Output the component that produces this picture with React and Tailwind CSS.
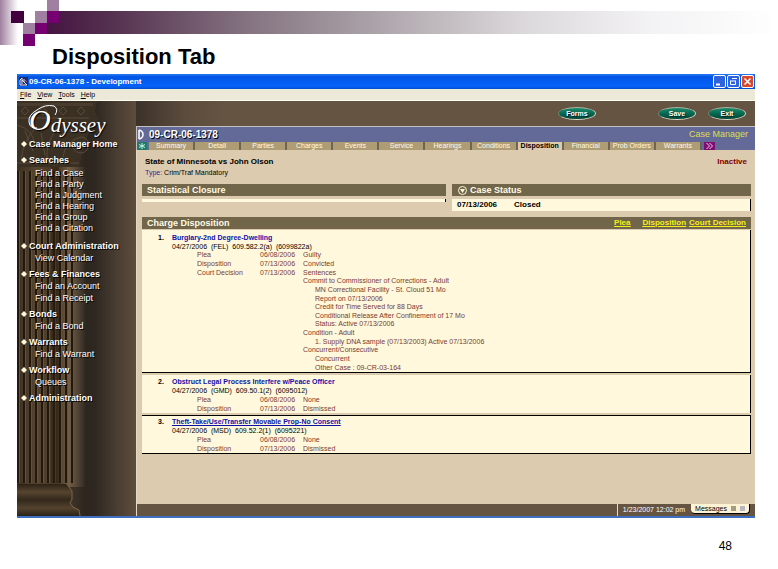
const navGroups = [
    { title: "Case Manager Home", items: [] },
    {
        title: "Searches",
        dense: true,
        items: ["Find a Case", "Find a Party", "Find a Judgment", "Find a Hearing", "Find a Group", "Find a Citation"],
    },
    { title: "Court Administration", items: ["View Calendar"] },
    { title: "Fees & Finances", items: ["Find an Account", "Find a Receipt"] },
    { title: "Bonds", items: ["Find a Bond"] },
    { title: "Warrants", items: ["Find a Warrant"] },
    { title: "Workflow", items: ["Queues"] },
    { title: "Administration", items: [] },
];

const tabs = [
    "Summary",
    "Detail",
    "Parties",
    "Charges",
    "Events",
    "Service",
    "Hearings",
    "Conditions",
    "Disposition",
    "Financial",
    "Prob Orders",
    "Warrants",
];

const charges = [
    {
        title: "Burglary-2nd Degree-Dwelling",
        statute: "04/27/2006  (FEL)  609.582.2(a)  (6099822a)",
        rows: [
            ["Plea", "06/08/2006", "Guilty"],
            ["Disposition", "07/13/2006", "Convicted"],
            ["Court Decision", "07/13/2006", "Sentences"],
            ["", "", "Commit to Commissioner of Corrections - Adult"],
            ["", "", "MN Correctional Facility - St. Cloud 51 Mo", true],
            ["", "", "Report on 07/13/2006", true],
            ["", "", "Credit for Time Served for 88 Days", true],
            ["", "", "Conditional Release After Confinement of 17 Mo", true],
            ["", "", "Status: Active 07/13/2006", true],
            ["", "", "Condition - Adult"],
            ["", "", "1. Supply DNA sample (07/13/2003) Active 07/13/2006", true],
            ["", "", "Concurrent/Consecutive"],
            ["", "", "Concurrent", true],
            ["", "", "Other Case : 09-CR-03-164", true],
        ],
        panel: "border-b pt-[3px]",
        table: "h-[121px]",
    },
    {
        title: "Obstruct Legal Process Interfere w/Peace Officer",
        statute: "04/27/2006  (GMD)  609.50.1(2)  (6095012)",
        rows: [
            ["Plea", "06/08/2006", "None"],
            ["Disposition", "07/13/2006", "Dismissed"],
        ],
        panel: "pt-[2px]",
        table: "h-[18px]",
    },
    {
        title: "Theft-Take/Use/Transfer Movable Prop-No Consent",
        statute: "04/27/2006  (MSD)  609.52.2(1)  (6095221)",
        rows: [
            ["Plea", "06/08/2006", "None"],
            ["Disposition", "07/13/2006", "Dismissed"],
        ],
        underlined: true,
        panel: "border-y pt-[1px]",
        table: "h-[18px]",
    },
];

function SlideHeader() {
    return (
        <div className="relative h-[46px]">
            <div className="absolute top-[11px] right-0 left-[35px] h-[23px] bg-[linear-gradient(to_right,#42103f_0%,#54304f_10%,#83717f_28%,#aaa1a7_45%,#dcd9dc_66%,#f3f2f4_83%,#ffffff_100%)]" />
            <svg className="absolute top-0 left-0" width="60" height="46" viewBox="0 0 60 46" shapeRendering="crispEdges">
                <defs>
                    <linearGradient id="fade">
                        <stop offset="0" stopColor="#a080a0" />
                        <stop offset="1" stopColor="#ffffff" />
                    </linearGradient>
                </defs>
                <rect width="60" height="11" fill="#fff" />
                <rect x="23" y="11" width="24" height="23" fill="#fff" />
                <rect width="18" height="45" fill="url(#fade)" />
                <rect x="11" y="11" width="13" height="12" fill="#42003f" />
                <rect x="23" y="23" width="12" height="11" fill="#a080a0" />
                <rect x="23" y="34" width="12" height="12" fill="#760072" />
                <rect x="35" y="11" width="12" height="12" fill="#a080a0" />
                <rect x="35" y="23" width="12" height="11" fill="#760072" />
                <rect x="47" y="0" width="12" height="11" fill="#a080a0" />
                <rect x="47" y="11" width="12" height="12" fill="#760072" />
            </svg>
        </div>
    );
}

function TitleBar() {
    return (
        <div className="flex h-[15px] items-center bg-[linear-gradient(#2a7df5_0%,#0355e4_18%,#0562fb_80%,#0450d0_100%)] pr-px pl-[2px]">
            <svg width="9" height="9" viewBox="0 0 9 9">
                <rect width="9" height="9" fill="#1b2a6b" />
                <path d="M1 8V3l2-2v6M3 3l5 5M5 2v3M1 8h7" stroke="#e8e4ee" fill="none" />
                <path d="M6 3l2 2" stroke="#b05a6a" />
            </svg>
            <span className="ml-px flex-1 text-[8px] leading-[15px] font-bold text-white">09-CR-06-1378 - Development</span>
            <div className="flex gap-px">
                <button aria-label="Minimize" className="size-[13px] rounded-[2px] border border-white bg-[#2f62dd]">
                    <svg viewBox="0 0 11 11"><path d="M2 8.500h4" stroke="#fff" strokeWidth="2" /></svg>
                </button>
                <button aria-label="Restore" className="size-[13px] rounded-[2px] border border-white bg-[#2f62dd]">
                    <svg viewBox="0 0 11 11" fill="none" stroke="#fff"><path d="M4 2.500h5M2.500 5v3.500h5V5M2 5h6" /></svg>
                </button>
                <button aria-label="Close" className="size-[13px] rounded-[2px] border border-white bg-[#d8492c]">
                    <svg viewBox="0 0 11 11"><path d="M2.500 2.500l6 6M8.500 2.500l-6 6" stroke="#fff" strokeWidth="1.500" /></svg>
                </button>
            </div>
        </div>
    );
}

function MenuBar() {
    return (
        <nav className="flex h-[12px] gap-[6px] border-b border-[#fffef0] bg-[#ece9d8] pl-[3px] text-[7px] leading-[11px] text-black">
            {["File", "View", "Tools", "Help"].map((label) => (
                <button key={label}>
                    <span className="underline">{label[0]}</span>{label.slice(1)}
                </button>
            ))}
        </nav>
    );
}

// Stone column behind the navigation
function Column() {
    const flutes = [2, 8, 14, 20, 26, 32, 38, 44, 50, 56];
    return (
        <svg className="absolute top-0 left-0" width="119" height="415" viewBox="0 0 119 415" aria-hidden="true">
            <defs>
                <linearGradient id="shaft">
                    <stop offset="0" stopColor="#3f3121" />
                    <stop offset="0.4" stopColor="#57452f" />
                    <stop offset="0.8" stopColor="#453521" />
                    <stop offset="1" stopColor="#6b5740" />
                </linearGradient>
                <linearGradient id="base" x1="0" y1="0" x2="0" y2="1">
                    <stop offset="0" stopColor="#2c2215" />
                    <stop offset="0.25" stopColor="#56452f" />
                    <stop offset="0.5" stopColor="#33281a" />
                    <stop offset="0.75" stopColor="#54432f" />
                    <stop offset="1" stopColor="#2b2217" />
                </linearGradient>
                <linearGradient id="halo">
                    <stop offset="0" stopColor="#78634a" />
                    <stop offset="1" stopColor="#78634a" stopOpacity="0" />
                </linearGradient>
            </defs>
            <path d="M0 0h80l-2 10 4 8-10 12-6 18-4 18H0z" fill="#3b3024" />
            <path d="M0 2h76v3H0zM0 16h72v2H0z" fill="#4a3d2d" />
            <g fill="none" stroke="#5a4b38">
                <path d="M4 10l4-4 4 4-4 4zM22 10l4-4 4 4-4 4zM42 10l4-4 4 4-4 4zM60 10l4-4 4 4-4 4z" />
                <path d="M0 24q16 4 18 20M4 60q2-22 16-34M30 60q-2-20 12-34M46 56q2-16 18-20a8 8 0 1 1-8 10" />
                <path d="M0 62h62M8 30l8 20M24 32l4 22" />
            </g>
            <rect x="49" y="66" width="20" height="320" fill="url(#halo)" />
            <rect y="66" width="50" height="320" fill="url(#shaft)" />
            {flutes.map((x) => (
                <g key={x}>
                    <rect x={x - 2} y="70" width="2" height="312" fill="#211910" />
                    <rect x={x} y="70" width="1" height="312" fill="#665238" />
                </g>
            ))}
            <rect x="34" y="66" width="8" height="316" fill="#2a2014" opacity="0.5" />
            <path d="M0 383h50l5 7-1 8-1 4 3 4 6 3 1 6H0z" fill="url(#base)" />
            <path d="M49 382l6 8v8l-2 4 3 4 6 3 1 6" fill="none" stroke="#7a654a" />
        </svg>
    );
}

function Logo() {
    return (
        <div className="relative flex h-[35px] items-end pl-[12px] font-['Liberation_Serif',serif] text-white italic [text-shadow:1px_1px_1px_#000]">
            {/* flourish around the capital */}
            <svg className="absolute top-0 left-[8px]" width="60" height="35" viewBox="0 0 60 35" fill="none" stroke="#fff" aria-hidden="true">
                <path d="M12 9Q3 14 4 21t8 6M12 9q8-6 17-4 5 3 1 9" />
            </svg>
            <span className="text-[30px] leading-[33px]">O</span>
            <span className="text-[21px] leading-[22px]">dyssey</span>
        </div>
    );
}

function Sidebar() {
    return (
        <aside className="relative w-[119px] shrink-0 bg-[linear-gradient(to_right,#40362a_0%,#40362a_42%,#3a3026_48%,#2d261f_58%,#2f2822_66%,#4a3d31_84%,#5d4d3e_100%)]">
            <Column />
            <div className="relative">
                <Logo />
                <nav className="pt-[2px] pl-[4px] text-white [text-shadow:1px_1px_0_#000]">
                    {navGroups.map((group) => (
                        <div key={group.title} className="mb-1">
                            <a href="#" className="flex items-center text-[9px] leading-[12px] font-bold">
                                <svg className="mr-[2px]" width="6" height="6" viewBox="0 0 6 6"><path d="M3 0l3 3-3 3-3-3z" fill="#fff8dc" /></svg>
                                {group.title}
                            </a>
                            {group.items.length > 0 && (
                                <ul className={`pl-[14px] text-[9px] ${group.dense ? "py-[2px] leading-[11px]" : "leading-[12px]"}`}>
                                    {group.items.map((item) => (
                                        <li key={item}><a href="#">{item}</a></li>
                                    ))}
                                </ul>
                            )}
                        </div>
                    ))}
                </nav>
            </div>
        </aside>
    );
}

function OvalButton({ children }) {
    return (
        <button className="h-[13px] w-[38px] rounded-[50%] border border-t-[#a9b3a0] border-r-[#d6d0bd] border-b-[#e0dccb] border-l-[#6f8072] bg-[linear-gradient(#1c8a6c,#04624c_60%,#024436)] text-center text-[7px] leading-[10px] font-bold text-white [text-shadow:1px_1px_0_#022]">
            {children}
        </button>
    );
}

function CaseHeader() {
    return (
        <header className="border-t border-l border-[#c4c0c0] bg-[#646a98]">
            <div className="flex h-[15px] items-center justify-between pr-[7px]">
                <div className="flex items-center">
                    <svg width="8" height="11" viewBox="0 0 8 11"><path d="M2 1v9M2 1q4 1 4 4.500T2 10" fill="none" stroke="#fff" strokeWidth="1.500" /></svg>
                    <h2 className="ml-[4px] text-[10px] leading-[15px] font-bold text-white [text-shadow:1px_1px_0_#000]">09-CR-06-1378</h2>
                </div>
                <span className="text-[9px] leading-[15px] text-[#dede50]">Case Manager</span>
            </div>
            <div className="flex h-[8px] items-stretch">
                <button aria-label="Favorites" className="mr-[2px] w-[10px] bg-[#25796b]">
                    <svg width="10" height="8" viewBox="0 0 10 8"><path d="M5 1v6M2 2.500l6 3M8 2.500l-6 3" stroke="#bff2dc" /></svg>
                </button>
                {tabs.map((tab) => (
                    <button
                        key={tab}
                        className={`min-w-0 flex-1 border-r-2 border-[#6f6553] text-center text-[7px] leading-[8px] whitespace-nowrap ${
                            tab === "Disposition" ? "bg-[#dccbae] font-bold text-black" : "bg-[#ae9c75] text-[#fffbe8]"
                        }`}
                    >
                        {tab}
                    </button>
                ))}
                <button aria-label="More tabs" className="mr-[40px] ml-[2px] w-[11px] bg-[#7c0f70]">
                    <svg width="11" height="8" viewBox="0 0 11 8" fill="none" stroke="#f6c8ee"><path d="M2.500 1l3 3-3 3M5.500 1l3 3-3 3" /></svg>
                </button>
            </div>
        </header>
    );
}

function Charge({ charge, number }) {
    return (
        <section className={`flex border-r border-black bg-[#fff8dc] text-[7px] ${charge.panel}`}>
            <span className="w-[30px] pl-[16px] leading-[9px] font-bold">{number}.</span>
            <div>
                <h4 className="leading-[9px] font-bold">
                    <a href="#" className={`text-[#1010a8] ${charge.underlined ? "underline" : ""}`}>{charge.title}</a>
                </h4>
                <p className="leading-[9px] whitespace-pre">{charge.statute}</p>
                <table className={`ml-[25px] border-collapse leading-[8px] text-[#7a3a30] ${charge.table}`}>
                    <tbody>
                        {charge.rows.map(([label, date, value, nested], i) => (
                            <tr key={i}>
                                <td className="w-[63px] p-0">{label}</td>
                                <td className="w-[43px] p-0">{date}</td>
                                <td className={nested ? "p-0 pl-[12px]" : "p-0"}>{value}</td>
                            </tr>
                        ))}
                    </tbody>
                </table>
            </div>
        </section>
    );
}

function CaseBody() {
    return (
        <main className="flex-1 border-l border-[#e6d9c2] bg-[#dccbae] pr-[4px] pb-[50px] pl-[5px] text-black">
            <div className="flex justify-between pt-[6px] pr-[4px] pb-[6px] pl-[3px] leading-[11px]">
                <div>
                    <h3 className="text-[8px] font-bold">State of Minnesota vs John Olson</h3>
                    <p className="text-[7px] whitespace-pre"><span className="text-[#2a2a98]">Type:</span> Crim/Traf Mandatory</p>
                </div>
                <span className="text-[8px] font-bold text-[#800000]">Inactive</span>
            </div>

            <div className="grid grid-cols-[304fr_299fr] gap-[6px]">
                <section>
                    <h3 className="bg-[#716649] pl-[5px] text-[9px] leading-[12px] font-bold text-[#fffbe8]">Statistical Closure</h3>
                    <div className="mt-[3px] h-[3px] border-r border-black bg-[#fff8dc]" />
                </section>
                <section>
                    <h3 className="flex items-center bg-[#716649] pl-[6px] text-[9px] leading-[12px] font-bold text-[#fffbe8]">
                        <svg className="mr-[3px]" width="9" height="9" viewBox="0 0 9 9">
                            <circle cx="4.500" cy="4.500" r="4" fill="none" stroke="#fff8dc" />
                            <path d="M2 3h5l-2.500 4z" fill="#fff8dc" />
                        </svg>
                        Case Status
                    </h3>
                    <p className="mt-[3px] flex gap-[17px] border-r border-black bg-[#fff8dc] pl-[5px] text-[8px] leading-[12px] font-bold">
                        <span>07/13/2006</span>
                        <span>Closed</span>
                    </p>
                </section>
            </div>

            <div className="mt-[6px] mb-px flex h-[12px] items-center bg-[#716649] pr-[5px] pl-[5px]">
                <h3 className="flex-1 text-[9px] leading-[12px] font-bold text-[#fffbe8]">Charge Disposition</h3>
                <div className="flex text-[8px] leading-[12px] font-bold text-[#f4f01a] underline">
                    <a href="#" className="mr-[12px]">Plea</a>
                    <a href="#" className="mr-[3px]">Disposition</a>
                    <a href="#">Court Decision</a>
                </div>
            </div>
            <div className="flex flex-col gap-[2px]">
                {charges.map((charge, i) => (
                    <Charge key={charge.title} charge={charge} number={i + 1} />
                ))}
            </div>
        </main>
    );
}

function StatusBar() {
    return (
        <footer className="flex h-[12px] justify-end border-l border-[#e6d9c2] bg-[#655442] pr-[5px]">
            <span className="border-l border-[#e6dcc8] pr-[6px] pl-[5px] text-[7px] leading-[12px] text-white">1/23/2007 12:02 pm</span>
            <button className="flex h-[10px] items-center gap-[4px] rounded-b-[4px] border-r border-b border-black bg-[#fff3d6] px-[4px] text-[7px] leading-[9px] text-black">
                Messages
                <span className="size-[5px] bg-[#a39d84]" />
                <span className="size-[5px] bg-[#b8b6c2]" />
            </button>
        </footer>
    );
}

export default function App() {
    return (
        <div className="bg-white pb-4 font-['Liberation_Sans',Arial,sans-serif]">
            <SlideHeader />
            <h1 className="pl-[52px] text-[22px] leading-[22px] font-bold text-black">Disposition Tab</h1>

            <div className="mt-[6px] mr-[23px] ml-[17px] border-b-2 border-[#3f6fc0]">
                <TitleBar />
                <MenuBar />
                <div className="flex">
                    <Sidebar />
                    <div className="flex min-w-0 flex-1 flex-col">
                        <div className="flex h-[25px] items-center justify-end gap-[12px] bg-[linear-gradient(to_right,#3c3229_0px,#5c4c3d_50px,#655442_90px)] pr-[9px]">
                            <div className="mr-[50px] flex"><OvalButton>Forms</OvalButton></div>
                            <OvalButton>Save</OvalButton>
                            <OvalButton>Exit</OvalButton>
                        </div>
                        <CaseHeader />
                        <CaseBody />
                        <StatusBar />
                    </div>
                </div>
            </div>

            <p className="mt-[20px] pr-[46px] text-right text-[12px] leading-[16px] text-black">48</p>
        </div>
    );
}
